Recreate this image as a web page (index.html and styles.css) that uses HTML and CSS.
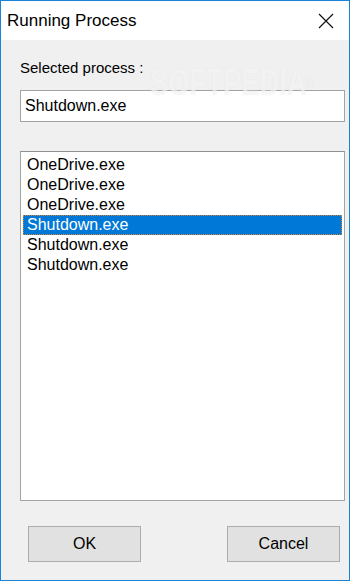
FILE: index.html
```html
<!DOCTYPE html>
<html lang="en">
<head>
    <meta charset="UTF-8">
    <title>Running Process</title>
    <link rel="stylesheet" href="styles.css">
</head>
<body class="page">
<div class="window">
    <div class="titlebar">
        <div class="title">Running Process</div>
        <div class="close">
            <svg width="16" height="16" viewBox="0 0 16 16">
                <path d="M1 1 L15 15 M15 1 L1 15" stroke="#111" stroke-width="1.2" fill="none"/>
            </svg>
        </div>
    </div>
    <div class="content">
        <div class="label">Selected process :</div>
        <div class="textbox">Shutdown.exe</div>
        <div class="listbox">
            <div class="item">OneDrive.exe</div>
            <div class="item">OneDrive.exe</div>
            <div class="item">OneDrive.exe</div>
            <div class="item selected">Shutdown.exe</div>
            <div class="item">Shutdown.exe</div>
            <div class="item">Shutdown.exe</div>
        </div>
        <div class="buttons">
            <button class="btn">OK</button>
            <button class="btn">Cancel</button>
        </div>
        <div class="watermark">SOFTPEDIA<span class="reg">®</span></div>
    </div>
</div>
</body>
</html>
```

FILE: styles.css
```css
.page {
    margin: 0;
    background: #ffffff;
    font-family: "Liberation Sans", Arial, sans-serif;
}

.window {
    width: 350px;
    height: 581px;
    box-sizing: border-box;
    border: 1px solid #1883d7;
    display: flex;
    flex-direction: column;
    background: #f0f0f0;
    overflow: hidden;
}

.titlebar {
    height: 39px;
    background: #ffffff;
    display: flex;
    align-items: center;
    justify-content: space-between;
    padding: 0 15px 0 6px;
}

.title {
    font-size: 17px;
    color: #000;
}

.close {
    display: flex;
    margin-top: 1px;
}

.content {
    position: relative;
    flex: 1;
    padding: 19px 0 0 19px;
}

.label {
    font-size: 15px;
    line-height: 18px;
    color: #000;
    margin-bottom: 13px;
}

.textbox {
    width: 325px;
    height: 32px;
    box-sizing: border-box;
    border: 1px solid #a3a3a3;
    background: #fff;
    font-size: 16px;
    line-height: 30px;
    padding-left: 4px;
}

.listbox {
    width: 325px;
    height: 350px;
    box-sizing: border-box;
    margin-top: 29px;
    border: 1px solid #a3a3a3;
    border-top-color: #8f8f8f;
    background: #fff;
    padding: 3px 2px;
}

.item {
    height: 20px;
    line-height: 20px;
    font-size: 16px;
    padding-left: 4px;
    box-sizing: border-box;
}

.item.selected {
    background: #0078d7;
    color: #fff;
    outline: 1px dotted #d9822b;
    outline-offset: -1px;
}

.buttons {
    display: flex;
    justify-content: space-between;
    width: 325px;
    box-sizing: border-box;
    padding: 0 5px 0 8px;
    margin-top: 25px;
}

.btn {
    width: 113px;
    height: 36px;
    border: 1px solid #adadad;
    background: #e1e1e1;
    font-family: "Liberation Sans", Arial, sans-serif;
    font-size: 16px;
    color: #000;
    padding: 0;
}

.watermark {
    position: absolute;
    top: 23px;
    left: 149px;
    font-size: 36px;
    line-height: 40px;
    font-weight: bold;
    white-space: nowrap;
    color: rgba(255, 255, 255, 0.6);
    text-shadow: 0 0 1px rgba(170, 170, 170, 0.25);
    transform: scaleX(0.76);
    transform-origin: left top;
    pointer-events: none;
}

.watermark .reg {
    font-size: 14px;
    vertical-align: top;
    font-weight: normal;
}
```
